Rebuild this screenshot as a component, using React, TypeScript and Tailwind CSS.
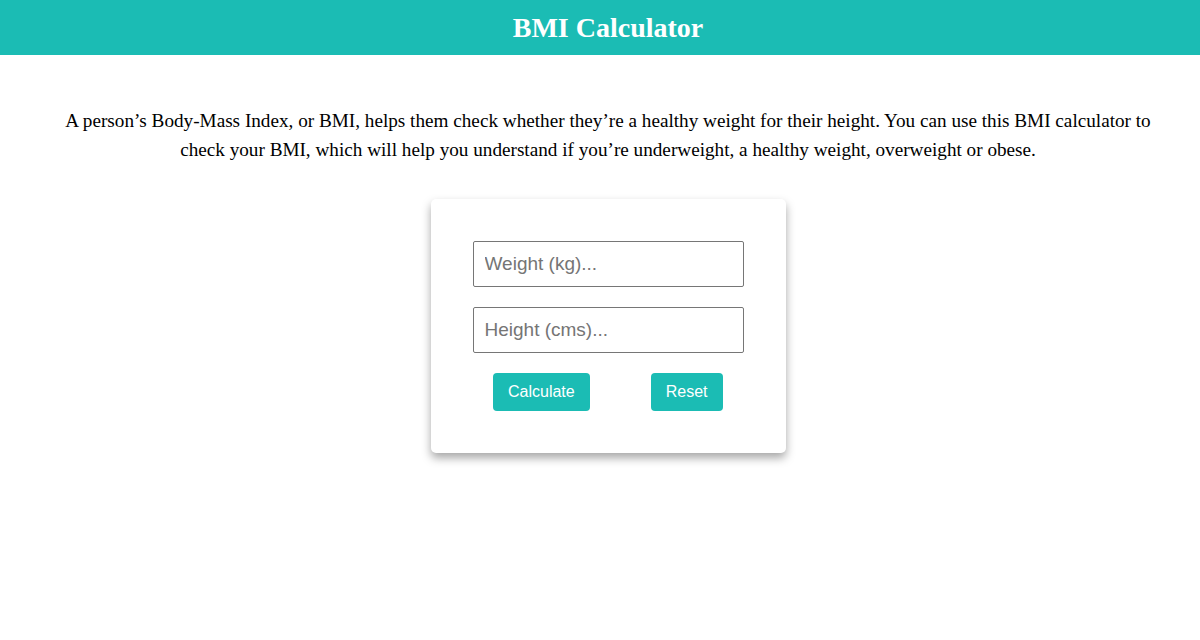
import { useState } from 'react';

export default function App() {
  const [weight, setWeight] = useState('');
  const [height, setHeight] = useState('');
  const [bmi, setBmi] = useState<string | null>(null);

  const handleCalculate = () => {
    const w = parseFloat(weight);
    const h = parseFloat(height) / 100;
    if (!w || !h) {
      setBmi(null);
      return;
    }
    setBmi((w / (h * h)).toFixed(1));
  };

  const handleReset = () => {
    setWeight('');
    setHeight('');
    setBmi(null);
  };

  return (
    <div className="min-h-screen bg-white">
      {/* Header */}
      <header className="h-[55px] bg-[#1bbcb4] pl-4 flex items-center justify-center">
        <h1 className="text-[28px] font-bold text-white font-['Liberation_Serif',serif]">BMI Calculator</h1>
      </header>

      <main className="pl-4">
        <p className="px-[46px] mt-[51px] text-center text-[19.2px] leading-[29px] text-black font-['Liberation_Serif',serif]">
          A person’s Body-Mass Index, or BMI, helps them check whether they’re a healthy weight for their height. You can use this BMI calculator to check your BMI, which will help you understand if you’re underweight, a healthy weight, overweight or obese.
        </p>

        {/* Calculator card */}
        <div className="flex justify-center mt-[35px]">
          <div className="w-[355px] bg-white rounded-[5px] p-[42px] shadow-[0_5px_10px_rgba(0,0,0,0.35)] font-['Liberation_Sans',Arial,sans-serif]">
            <div className="flex flex-col gap-5">
              <input
                type="number"
                placeholder="Weight (kg)..."
                value={weight}
                onChange={(e) => setWeight(e.target.value)}
                className="h-[46px] w-full border border-[#767676] rounded-[2px] px-[11px] text-[19px] text-black placeholder:text-[#757575] outline-none"
              />
              <input
                type="number"
                placeholder="Height (cms)..."
                value={height}
                onChange={(e) => setHeight(e.target.value)}
                className="h-[46px] w-full border border-[#767676] rounded-[2px] px-[11px] text-[19px] text-black placeholder:text-[#757575] outline-none"
              />
              <div className="flex justify-between pl-5 pr-[21px]">
                <button
                  onClick={handleCalculate}
                  className="h-[38px] px-[15.5px] bg-[#1bbcb4] text-white text-base rounded-[4px]"
                >
                  Calculate
                </button>
                <button
                  onClick={handleReset}
                  className="h-[38px] px-[15px] bg-[#1bbcb4] text-white text-base rounded-[4px]"
                >
                  Reset
                </button>
              </div>
              {bmi && <p className="text-center text-base">Your BMI is {bmi}</p>}
            </div>
          </div>
        </div>
      </main>
    </div>
  );
}
